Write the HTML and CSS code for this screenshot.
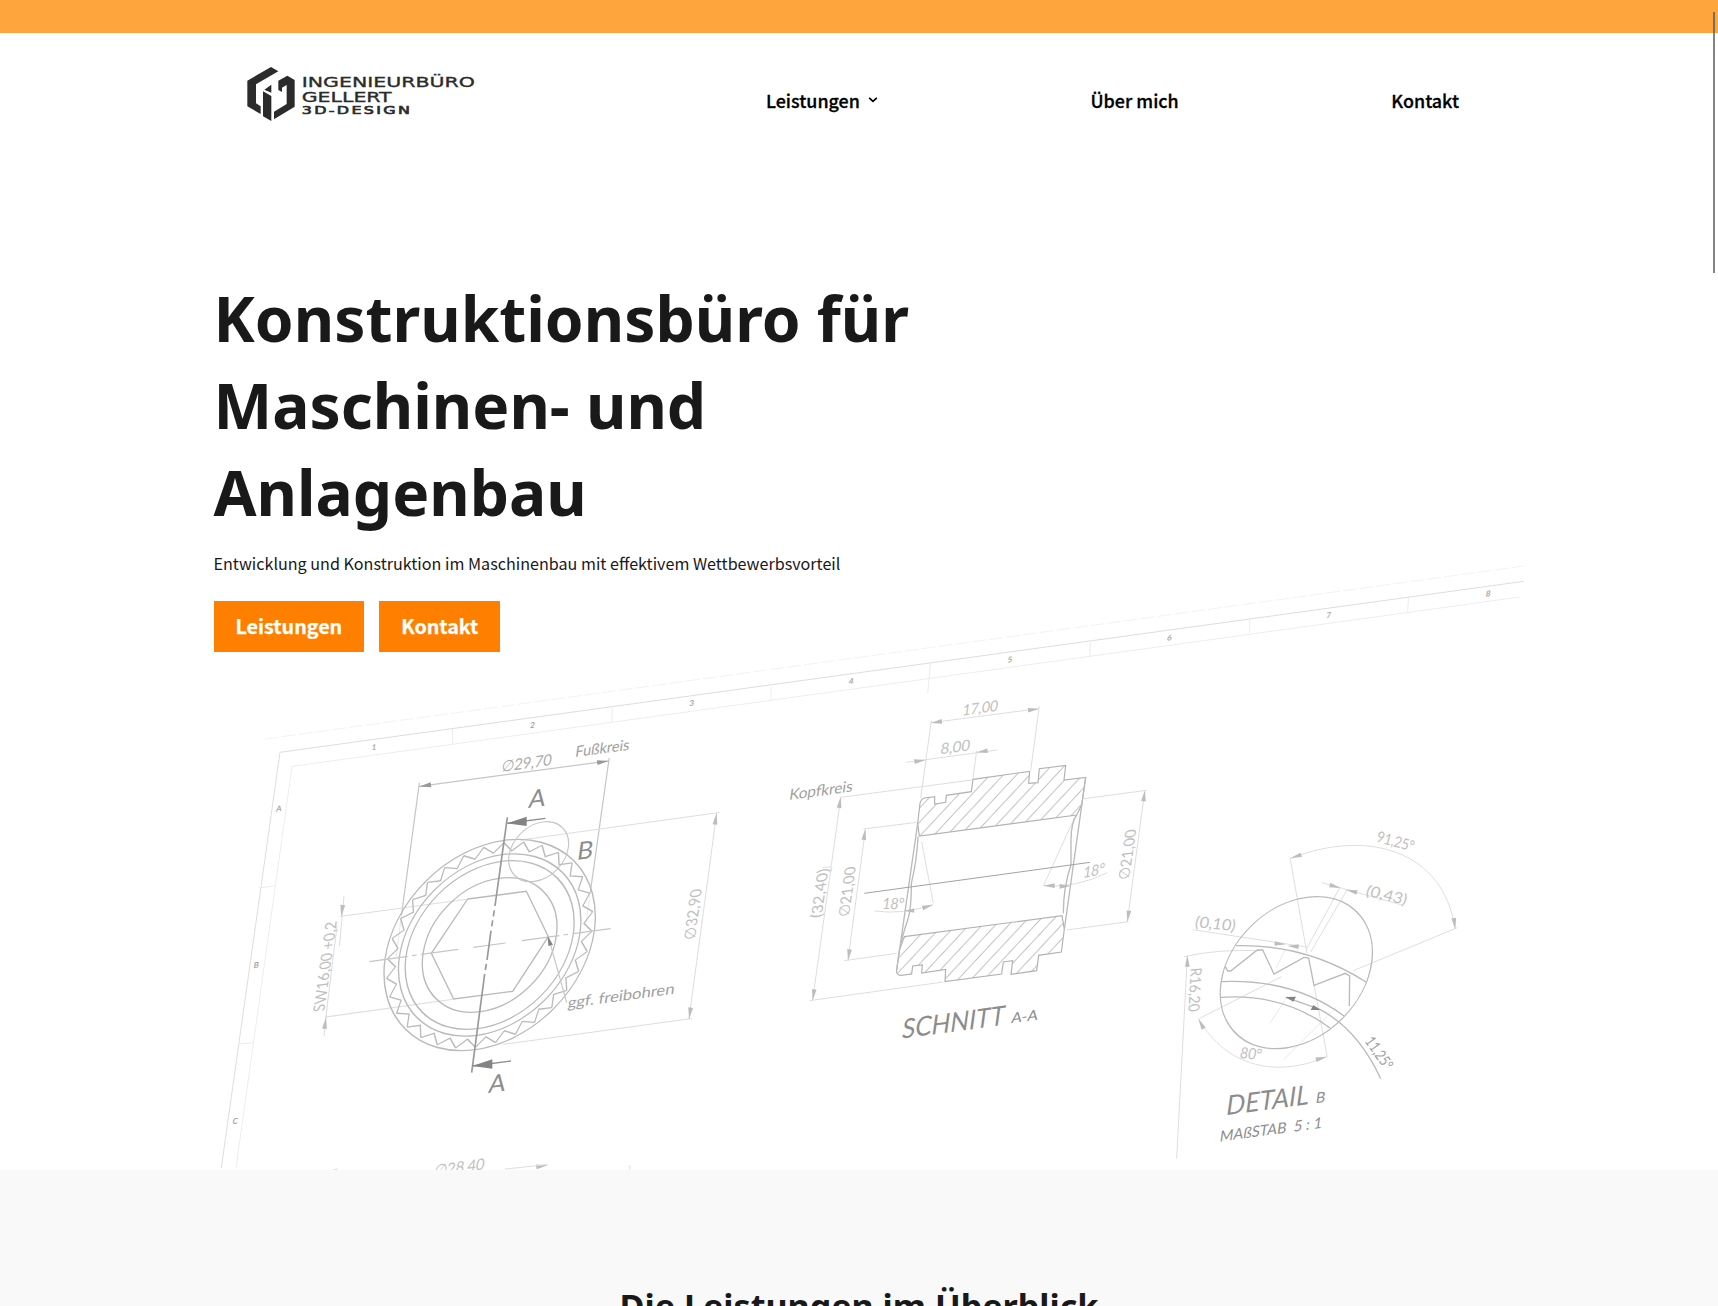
FILE: index.html
```html
<!DOCTYPE html>
<html lang="de">
<head>
<meta charset="utf-8">
<title>Ingenieurbüro Gellert 3D-Design</title>
<link rel="stylesheet" href="styles.css">
</head>
<body>
<div class="topbar"></div>
<header class="header">
  <a class="logo" href="#">
    <svg class="logo-svg" viewBox="0 0 780 270" role="img" aria-label="Ingenieurbüro Gellert 3D-Design">
      <path d="M123 51l22 13-67 39v57l14 9v23l-40-23V92zM103 119l21-15v24zM99 124l25 14v75l-25-14zM145 92l27-15 22 13v80l-62 38v-23l38-23v-57l-14 8v13l-11-6z"/>
      <text x="215" y="110" font-size="44" textLength="520" lengthAdjust="spacingAndGlyphs">INGENIEURBÜRO</text>
      <text x="215" y="156" font-size="44" textLength="270" lengthAdjust="spacingAndGlyphs">GELLERT</text>
      <text class="logo-sub" x="215" y="193" font-size="34" textLength="332" lengthAdjust="spacingAndGlyphs">3D-DESIGN</text>
    </svg>
  </a>
  <nav class="nav">
    <a class="nav-link" href="#">Leistungen
      <svg class="chevron" viewBox="0 0 10 10"><path d="M1.2 2.8L5 6.4l3.8-3.6"/></svg>
    </a>
    <a class="nav-link" href="#">Über mich</a>
    <a class="nav-link" href="#">Kontakt</a>
  </nav>
</header>
<main>
  <section class="hero">
    <svg class="drawing" viewBox="0 170 1718 1000" aria-hidden="true">
      <defs>
        <path id="tooth" d="M0-307L27.4-279 60-301"/>
        <g id="t2"><use href="#tooth"/><use href="#tooth" transform="rotate(11.25)"/></g>
        <g id="t4"><use href="#t2"/><use href="#t2" transform="rotate(22.5)"/></g>
        <g id="t8"><use href="#t4"/><use href="#t4" transform="rotate(45)"/></g>
        <g id="t16"><use href="#t8"/><use href="#t8" transform="rotate(90)"/></g>
        <path id="arrow" d="M0 0L34-7V7z"/>
        <pattern id="hatch" width="29" height="29" patternUnits="userSpaceOnUse" patternTransform="rotate(43)"><path d="M10 0V29" stroke="#c2c2c2" stroke-width="3"/></pattern>
      </defs>

      <!-- sheet frame -->
      <g class="frame">
        <path class="faint" stroke-dasharray="14 3" d="M265 739L1524 566"/>
        <path class="main" d="M221.300 1168L280 752.300 1524 581.300"/>
        <path d="M236 1168L292 766.400 1520 597M452.400 729v15M612.500 708l-.7 14M771 687v13M930.400 664l-2.700 29M1090.300 642l-.5 14M1249.700 619v14M1408.500 598l-1 15M258.500 888l16-2M238 1044l15-1"/>
      </g>
      <g class="mark" text-anchor="middle">
        <text transform="matrix(1 -.135 -.14 1 373.600 750)">1</text>
        <text transform="matrix(1 -.135 -.14 1 532 728)">2</text>
        <text transform="matrix(1 -.135 -.14 1 691.400 706)">3</text>
        <text transform="matrix(1 -.135 -.14 1 850.700 684)">4</text>
        <text transform="matrix(1 -.135 -.14 1 1009.500 662.500)">5</text>
        <text transform="matrix(1 -.135 -.14 1 1169 640.500)">6</text>
        <text transform="matrix(1 -.135 -.14 1 1328.300 618)">7</text>
        <text transform="matrix(1 -.135 -.14 1 1487.700 596.500)">8</text>
        <text transform="matrix(1 -.135 -.14 1 278.500 811.500)">A</text>
        <text transform="matrix(1 -.135 -.14 1 255.800 968)">B</text>
        <text transform="matrix(1 -.135 -.14 1 234.800 1124)">C</text>
      </g>

      <!-- front view: dimensions -->
      <g transform="translate(200 650) scale(.3444)">
        <g class="line mid">
          <path d="M637 386L585 770M1188 314L1133 705M637 396L1187 322"/>
        </g>
        <g class="line light">
          <path d="M930 552L1508 472M880 1145L1428 1070M1500 475L1420 1070M405 774L775 724M362 1066L735 1014M418 715L405 860M372 1010L360 1122M398 800L366 1060"/>
        </g>
        <path class="line pale" d="M585 770L570 890M1133 705L1120 800"/>
        <g class="fill-mid">
          <use href="#arrow" transform="translate(637 396) rotate(-8)"/>
          <use href="#arrow" transform="translate(1187 322) rotate(172)"/>
        </g>
        <g class="fill-light">
          <use href="#arrow" transform="translate(1500 473) rotate(98)"/>
          <use href="#arrow" transform="translate(1420 1072) rotate(-82)"/>
          <use href="#arrow" transform="translate(410 774) rotate(-82)"/>
          <use href="#arrow" transform="translate(366 1066) rotate(98)"/>
          <use href="#arrow" transform="translate(1010 1496) rotate(172)"/>
        </g>
        <path class="line light" d="M885 1507L1010 1494M1248 1495v14M388 1509l12-2"/>
        <g class="txt t-mid">
          <text transform="matrix(1 -.135 -.14 1 873 354)" font-size="46" textLength="146" lengthAdjust="spacingAndGlyphs">∅29,70</text>
          <text class="t-dark" transform="matrix(1 -.135 -.14 1 1088 311)" font-size="44" textLength="157" lengthAdjust="spacingAndGlyphs">Fußkreis</text>
          <text class="t-dark" transform="matrix(1 -.135 -.14 1 1066 1040)" font-size="44" textLength="310" lengthAdjust="spacingAndGlyphs">ggf. freibohren</text>
        </g>
        <g class="txt t-light">
          <text transform="matrix(.14 -1 1 -.135 1437 838)" font-size="46" textLength="146" lengthAdjust="spacingAndGlyphs">∅32,90</text>
          <text transform="matrix(.14 -1 1 -.135 361 1048)" font-size="46" textLength="262" lengthAdjust="spacingAndGlyphs">SW16,00 +0,2</text>
          <text transform="matrix(1 -.135 -.14 1 678 1528)" font-size="46" textLength="146" lengthAdjust="spacingAndGlyphs">∅28,40</text>
        </g>
      </g>

      <!-- front view: gear -->
      <g transform="translate(360 780) scale(.33333)">
        <g class="line gear" transform="matrix(1 -.135 -.14 1 389 495)">
          <circle r="314"/><circle r="271"/><circle r="251"/><circle r="200"/>
          <use href="#t16"/><use href="#t16" transform="rotate(180)"/>
        </g>
        <path class="line gear" d="M323 357L499 334 565 470 458 634 281 657 214 520z"/>
        <circle class="line mid" r="89" transform="matrix(1 -.135 -.14 1 536 215)"/>
        <path class="line mid" d="M28 545L143 529M156 527l14-2M183 523L295 508M340 502L437 489M485 482L598 467M610 465l14-2M640 461L752 446"/>
        <path class="line axis" d="M442 112L405 378M403 391l-3 18M398 421l-3 18M393 452L381 540M379 552l-3 18M374 582L335 878"/>
        <path class="line dark" d="M442 130L556 115M337 858L453 843"/>
        <path class="line mid" d="M565 470L620 668"/>
        <path class="fill-dark" d="M440 130l60-20v28zM337 858l60-20v28zM563 468l16 26-14 4z"/>
        <g class="txt t-strong" font-size="74">
          <text transform="matrix(1 -.135 -.14 1 503 84)">A</text>
          <text transform="matrix(1 -.135 -.14 1 649 240)">B</text>
          <text transform="matrix(1 -.135 -.14 1 383 939)">A</text>
        </g>
      </g>

      <!-- section A-A -->
      <g transform="translate(770 680) scale(.33333)">
        <g class="line light">
          <path d="M484 122L452 355M808 78L782 272M484 128L806 86M408 247L682 210M620 212L609 295M212 352L606 300M212 354L128 960M118 962L520 906M280 447L440 427M286 450L234 840M222 842L380 820M942 356L1130 331M1124 335L1072 724M890 750L1076 725M455 485L490 670M916 408L820 618M314 693Q400 705 488 674M822 617Q920 624 1012 578"/>
          <path d="M186 561l-3 14M158 563l24-3M118 709l26-3"/>
        </g>
        <g class="fill-light">
          <use href="#arrow" transform="translate(482 129) rotate(-8)"/><use href="#arrow" transform="translate(808 86) rotate(172)"/>
          <use href="#arrow" transform="translate(467 240) rotate(172)"/><use href="#arrow" transform="translate(619 217) rotate(-8)"/>
          <use href="#arrow" transform="translate(212 350) rotate(98)"/><use href="#arrow" transform="translate(128 962) rotate(-82)"/>
          <use href="#arrow" transform="translate(286 446) rotate(98)"/><use href="#arrow" transform="translate(234 842) rotate(-82)"/>
          <use href="#arrow" transform="translate(1125 330) rotate(98)"/><use href="#arrow" transform="translate(1072 726) rotate(-82)"/>
          <use href="#arrow" transform="translate(490 674) rotate(163)"/><use href="#arrow" transform="translate(402 692) scale(.9)"/>
          <use href="#arrow" transform="translate(820 617)"/><use href="#arrow" transform="translate(903 618) rotate(178)"/>
        </g>
        <g class="section">
          <path d="M448 468L443 430 450 370Q453 357 463 354L494 350V372L527 367 529 346 604 335 609 298 779 274 776 310 804 308 808 266 887 256 882 300 947 292 935 375 920 405z"/>
          <path d="M403 770L876 707 883 748 874 816 806 826 800 872 723 883 728 842 700 846 695 882 525 905 527 868 455 879 457 855 428 858 425 882 393 886Q378 886 380 870L388 812z"/>
        </g>
        <path class="line gear" d="M443 430L380 870M947 292L883 748M444 470Q441 540 424 610Q424 690 413 720Q396 770 388 812M920 405Q903 430 903 480L903 555Q880 620 880 700"/>
        <path class="line axis-thin" d="M283 640L960 547"/>
        <g class="txt t-light" font-size="46">
          <text transform="matrix(1 -.135 -.14 1 576 107)" textLength="106" lengthAdjust="spacingAndGlyphs">17,00</text>
          <text transform="matrix(1 -.135 -.14 1 510 223)" textLength="88" lengthAdjust="spacingAndGlyphs">8,00</text>
          <text transform="matrix(1 0 -.14 1 335 687)" textLength="66" lengthAdjust="spacingAndGlyphs">18°</text>
          <text transform="matrix(1 -.2 -.14 1 938 594)" textLength="64" lengthAdjust="spacingAndGlyphs">18°</text>
          <text transform="matrix(.14 -1 1 -.135 155 712)" textLength="148" lengthAdjust="spacingAndGlyphs">(32,40)</text>
          <text transform="matrix(.14 -1 1 -.135 237 708)" textLength="150" lengthAdjust="spacingAndGlyphs">∅21,00</text>
          <text transform="matrix(.14 -1 1 -.135 1078 596)" textLength="150" lengthAdjust="spacingAndGlyphs">∅21,00</text>
          <text class="t-dark" transform="matrix(1 -.135 -.14 1 56 360)" textLength="190" lengthAdjust="spacingAndGlyphs">Kopfkreis</text>
        </g>
        <g class="txt t-title">
          <text transform="matrix(1 -.135 -.14 1 393 1076)" font-size="82" textLength="308" lengthAdjust="spacingAndGlyphs">SCHNITT</text>
          <text transform="matrix(1 -.135 -.14 1 722 1030)" font-size="44" textLength="80" lengthAdjust="spacingAndGlyphs">A-A</text>
        </g>
      </g>

      <!-- detail B -->
      <g transform="translate(1150 800) scale(.33333)">
        <g class="line light">
          <path d="M420 173L471 460M922 383L610 512M424 175C650 85 880 150 915 385M515 248L753 314M570 262L468 450M592 268L482 456M128 389L470 441M102 470Q200 447 330 452M112 470L80 1076M145 657L395 530M148 660C230 800 380 835 530 770M492 555L532 772"/>
        </g>
        <path class="line pale" d="M405 450L378 505M360 670L412 590M400 780L560 620"/>
        <circle class="line gear" r="226" transform="matrix(1 -.135 -.14 1 439 518)"/>
        <path class="line gear" d="M258 437Q470 432 648 546M213 545Q430 535 582 648M213 592Q400 580 540 684M226 500L233 513 242 513 322 450 338 450 372 522 462 472 476 474 492 556 586 520 599 528 598 618M510 628Q625 690 692 836"/>
        <path class="line gear" d="M408 592L510 628"/>
        <path class="fill-dark" d="M406 591l32-1-8 15zM512 630l-30 0 8-15z"/>
        <g class="fill-light">
          <use href="#arrow" transform="translate(421 174) rotate(-16)"/><use href="#arrow" transform="translate(916 388) rotate(-98)"/>
          <use href="#arrow" transform="translate(572 264) rotate(195)"/><use href="#arrow" transform="translate(588 269) rotate(14)"/>
          <use href="#arrow" transform="translate(408 433) rotate(184)"/><use href="#arrow" transform="translate(412 438) rotate(3)"/>
          <use href="#arrow" transform="translate(112 466) rotate(90)"/><use href="#arrow" transform="translate(145 656) rotate(62)"/>
          <use href="#arrow" transform="translate(531 770) rotate(164)"/>
        </g>
        <g class="txt t-light" font-size="46">
          <text transform="matrix(.96 .27 -.27 .96 677 124)" textLength="116" lengthAdjust="spacingAndGlyphs">91,25°</text>
          <text transform="matrix(.97 .23 -.3 .95 645 286)" textLength="125" lengthAdjust="spacingAndGlyphs">(0,43)</text>
          <text transform="matrix(.99 .1 -.2 1 133 381)" textLength="122" lengthAdjust="spacingAndGlyphs">(0,10)</text>
          <text transform="matrix(-.05 1 -1 .1 122 505)" textLength="132" lengthAdjust="spacingAndGlyphs">R16,20</text>
          <text transform="matrix(1 .1 -.2 1 268 774)" textLength="64" lengthAdjust="spacingAndGlyphs">80°</text>
          <text class="t-dark" transform="matrix(.58 .82 -.82 .58 643 724)" textLength="108" lengthAdjust="spacingAndGlyphs">11,25°</text>
        </g>
        <g class="txt t-title">
          <text transform="matrix(1 -.135 -.14 1 226 946)" font-size="82" textLength="247" lengthAdjust="spacingAndGlyphs">DETAIL</text>
          <text transform="matrix(1 -.135 -.14 1 496 910)" font-size="44">B</text>
          <text transform="matrix(1 -.135 -.14 1 208 1025)" font-size="46" textLength="306" lengthAdjust="spacingAndGlyphs" xml:space="preserve">MAßSTAB  5 : 1</text>
        </g>
      </g>
    </svg>
    <div class="hero-content">
      <h1 class="hero-title">Konstruktionsbüro für Maschinen- und Anlagenbau</h1>
      <p class="hero-text">Entwicklung und Konstruktion im Maschinenbau mit effektivem Wettbewerbsvorteil</p>
      <div class="buttons">
        <a class="button" href="#">Leistungen</a>
        <a class="button" href="#">Kontakt</a>
      </div>
    </div>
  </section>
  <section class="services">
    <h2 class="services-title">Die Leistungen im Überblick</h2>
  </section>
</main>
<div class="scroll-thumb"></div>
</body>
</html>
```
FILE: styles.css
```css
* { box-sizing: border-box; }
html, body { height: 100%; }
body {
  margin: 0;
  overflow: hidden;
  background: #fff;
  color: #191919;
  font-family: "Noto Sans CJK JP", "Noto Sans", sans-serif;
}
a { color: inherit; text-decoration: none; }

.topbar { height: 33px; background: #ffa53e; }

.header {
  display: flex;
  height: 137px;
  padding: 17px 259px 0 230px;
}
.logo { width: 260px; height: 90px; }
.logo-svg { display: block; width: 260px; height: 90px; fill: #2b2b2b; font-family: "DejaVu Sans", sans-serif; }
.logo-svg text { stroke: #2b2b2b; stroke-width: 1; }
.logo-svg .logo-sub { stroke-width: 2; letter-spacing: 5px; }

.nav {
  flex: 1;
  display: flex;
  justify-content: space-between;
  margin-left: 276px;
  height: 100px;
  align-items: center;
  color: #000;
  font-size: 17.900px;
  font-weight: 500;
  -webkit-text-stroke: .3px #000;
}
.nav-link { display: flex; align-items: center; line-height: 30px; }
.chevron { width: 10px; height: 10px; margin-left: 8px; fill: none; stroke: #000; stroke-width: 1.7; }

.hero { position: relative; height: 1000px; overflow: hidden; }
.drawing { position: absolute; inset: 0; width: 1718px; height: 1000px; }
.hero-content { position: relative; width: 720px; margin-left: 213.500px; padding-top: 104px; }
.hero-title {
  margin: 0;
  font-family: "Noto Sans", sans-serif;
  font-size: 62.220px;
  font-weight: 700;
  line-height: 87.150px;
}
.hero-text { margin: 14px 0 0; font-size: 16.140px; line-height: 28px; white-space: nowrap; }
.buttons { display: flex; gap: 15px; margin-top: 23.550px; }
.button {
  height: 51px;
  padding: 0 22px;
  background: #ff8000;
  color: #fff;
  font-size: 19.700px;
  font-weight: 700;
  line-height: 49px;
  -webkit-text-stroke: .25px #fff;
}

.services { height: 136px; overflow: hidden; background: #f9f9f9; padding-top: 112px; }
.services-title {
  margin: 0;
  text-align: center;
  font-family: "Noto Sans", sans-serif;
  font-size: 34.100px;
  font-weight: 700;
  line-height: 48px;
}

.scroll-thumb { position: fixed; top: 12px; right: 3px; width: 2px; height: 261px; background: rgba(90, 90, 90, .75); }

/* technical drawing */
.line, .frame path { fill: none; }
.frame path { stroke: #ededed; stroke-width: 1; }
.frame .main { stroke: #dedede; }
.frame .faint { stroke: #f3f3f3; }
.mark { fill: #a8a8a8; font: 700 8px Lato, sans-serif; }
.gear { stroke: #bababa; stroke-width: 4; }
.mid { stroke: #c6c6c6; stroke-width: 3.500; }
.light { stroke: #dedede; stroke-width: 3; }
.pale { stroke: #e9e9e9; stroke-width: 3; }
.dark { stroke: #8c8c8c; stroke-width: 4; }
.axis { stroke: #999; stroke-width: 5; }
.axis-thin { stroke: #a2a2a2; stroke-width: 3; }
.fill-dark { fill: #848484; }
.fill-mid { fill: #999; }
.fill-light { fill: #bdbdbd; }
.section path { fill: url(#hatch); stroke: #b2b2b2; stroke-width: 3.500; }
.txt { font-family: Lato, sans-serif; }
.t-light { fill: #c0c0c0; }
.t-mid { fill: #acacac; }
.txt .t-dark, .t-dark { fill: #a0a0a0; }
.t-strong, .t-title { fill: #8c8c8c; }
```
